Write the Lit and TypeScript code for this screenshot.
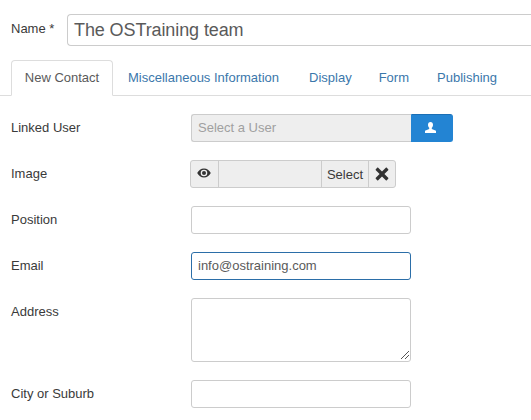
import { LitElement, html, css } from "lit";
import { customElement } from "lit/decorators.js";

@customElement("app-root")
export class AppRoot extends LitElement {
  static styles = css`
    :host { display: block; width: 531px; height: 420px; overflow: hidden; background: #fff;
      font-family: "Liberation Sans", Arial, sans-serif; font-size: 13px; color: #3a3a3a; }
    * { box-sizing: border-box; }
    .page { padding: 14px 0 0 11px; }
    .name { display: flex; align-items: center; gap: 11px; margin-right: -20px; }
    .name label { width: 45px; white-space: nowrap; margin-bottom: 4px; }
    .name .title { flex: 1; height: 32px; border: 1px solid #ccc; border-right: 0; border-radius: 4px 0 0 4px;
      font-size: 18px; letter-spacing: -0.1px; color: #5a5a5a; padding: 0 6px; line-height: 30px; }
    .tabs { display: flex; margin: 14px 0 18px -11px; padding-left: 11px; border-bottom: 1px solid #ddd; height: 36px; }
    .tab { height: 35px; padding: 0 14px; line-height: 36px; color: #3b77ab; white-space: nowrap; }
    .tab.active { color: #5a5a5a; height: 36px; width: 102px; padding: 0; text-align: center; background: #fff;
      border: 1px solid #ddd; border-bottom-color: #fff; border-radius: 4px 4px 0 0; line-height: 34px; }
    .tab.misc { margin-left: 1px; }
    .tab.display { margin-left: 1px; padding: 0 13px 0 15px; }
    .form { display: flex; flex-direction: column; gap: 18px; }
    .row { display: grid; grid-template-columns: 180px auto; align-items: start; }
    .row > label { line-height: 28px; }
    .input { display: block; width: 220px; height: 28px; border: 1px solid #ccc; border-radius: 3px; background: #fff;
      padding: 0 6px; line-height: 26px; color: #5a5a5a; }
    .input.focus { border-color: #2b6ea8; }
    .area { height: 64px; position: relative; }
    .grip { position: absolute; right: 0; bottom: 1px; width: 10px; height: 10px; }
    .group { display: flex; height: 28px; }
    .user-input { width: 220px; border: 1px solid #ccc; border-right: 0; border-radius: 3px 0 0 3px; background: #eee;
      color: #a0a0a0; padding: 0 6px; line-height: 26px; }
    .user-btn { width: 42px; background: #2384d3; border: 1px solid #2384d3; border-top-color: #1b6fb5; border-radius: 0 3px 3px 0;
      display: flex; align-items: center; justify-content: center; padding: 0 4px 1px 0; }
    .media { display: flex; height: 28px; width: 206px; margin-left: -1px; border: 1px solid #ccc; border-radius: 3px; background: #eee; }
    .media > div { display: flex; align-items: center; justify-content: center; border-right: 1px solid #ccc; }
    .media > div:last-child { border-right: 0; }
    .eye { width: 28px; padding: 0 1px 3px 0; }
    .blank { width: 103px; }
    .sel { width: 47px; color: #3a3a3a; }
    .x { flex: 1; }
  `;

  render() {
    return html`
      <div class="page">
        <div class="name">
          <label>Name *</label>
          <div class="title">The OSTraining team</div>
        </div>
        <div class="tabs">
          <div class="tab active">New Contact</div>
          <div class="tab misc">Miscellaneous Information</div>
          <div class="tab display">Display</div>
          <div class="tab">Form</div>
          <div class="tab">Publishing</div>
        </div>
        <div class="form">
          <div class="row">
            <label>Linked User</label>
            <div class="group">
              <div class="user-input">Select a User</div>
              <div class="user-btn">
                <svg width="13" height="13" viewBox="0 0 13 13"><path fill="#fff" d="M6.5 1C4.9 1 4 2.2 4 3.8c0 1.2.5 2.3 1.2 3v1.1L1 9.8V12h11V9.8L7.8 7.9V6.8C8.5 6.1 9 5 9 3.8 9 2.2 8.1 1 6.5 1z"/></svg>
              </div>
            </div>
          </div>
          <div class="row">
            <label>Image</label>
            <div class="media">
              <div class="eye">
                <svg width="14" height="10" viewBox="0 0 14 10"><path fill="#333" fill-rule="evenodd" d="M7 .5C4 .5 1.6 2.4.2 5 1.6 7.6 4 9.5 7 9.5s5.4-1.9 6.8-4.5C12.4 2.4 10 .5 7 .5zM7 8.3A3.3 3.3 0 1 1 7 1.7a3.3 3.3 0 0 1 0 6.6zM7 3a2 2 0 1 0 0 4 2 2 0 0 0 0-4z"/></svg>
              </div>
              <div class="blank"></div>
              <div class="sel">Select</div>
              <div class="x">
                <svg width="14" height="14" viewBox="0 0 14 14"><path fill="#333" d="M3.2.8 7 4.6 10.8.8c.3-.3.7-.3 1 0l1.4 1.4c.3.3.3.7 0 1L9.4 7l3.8 3.8c.3.3.3.7 0 1l-1.4 1.4c-.3.3-.7.3-1 0L7 9.4l-3.8 3.8c-.3.3-.7.3-1 0L.8 11.8c-.3-.3-.3-.7 0-1L4.6 7 .8 3.2c-.3-.3-.3-.7 0-1L2.2.8c.3-.3.7-.3 1 0z"/></svg>
              </div>
            </div>
          </div>
          <div class="row">
            <label>Position</label>
            <div class="input"></div>
          </div>
          <div class="row">
            <label>Email</label>
            <div class="input focus">info@ostraining.com</div>
          </div>
          <div class="row">
            <label>Address</label>
            <div class="input area">
              <svg class="grip" viewBox="0 0 10 10"><path stroke="#555" stroke-width="1" d="M1 9 9 1M5 9 9 5"/></svg>
            </div>
          </div>
          <div class="row">
            <label>City or Suburb</label>
            <div class="input"></div>
          </div>
        </div>
      </div>
    `;
  }
}
